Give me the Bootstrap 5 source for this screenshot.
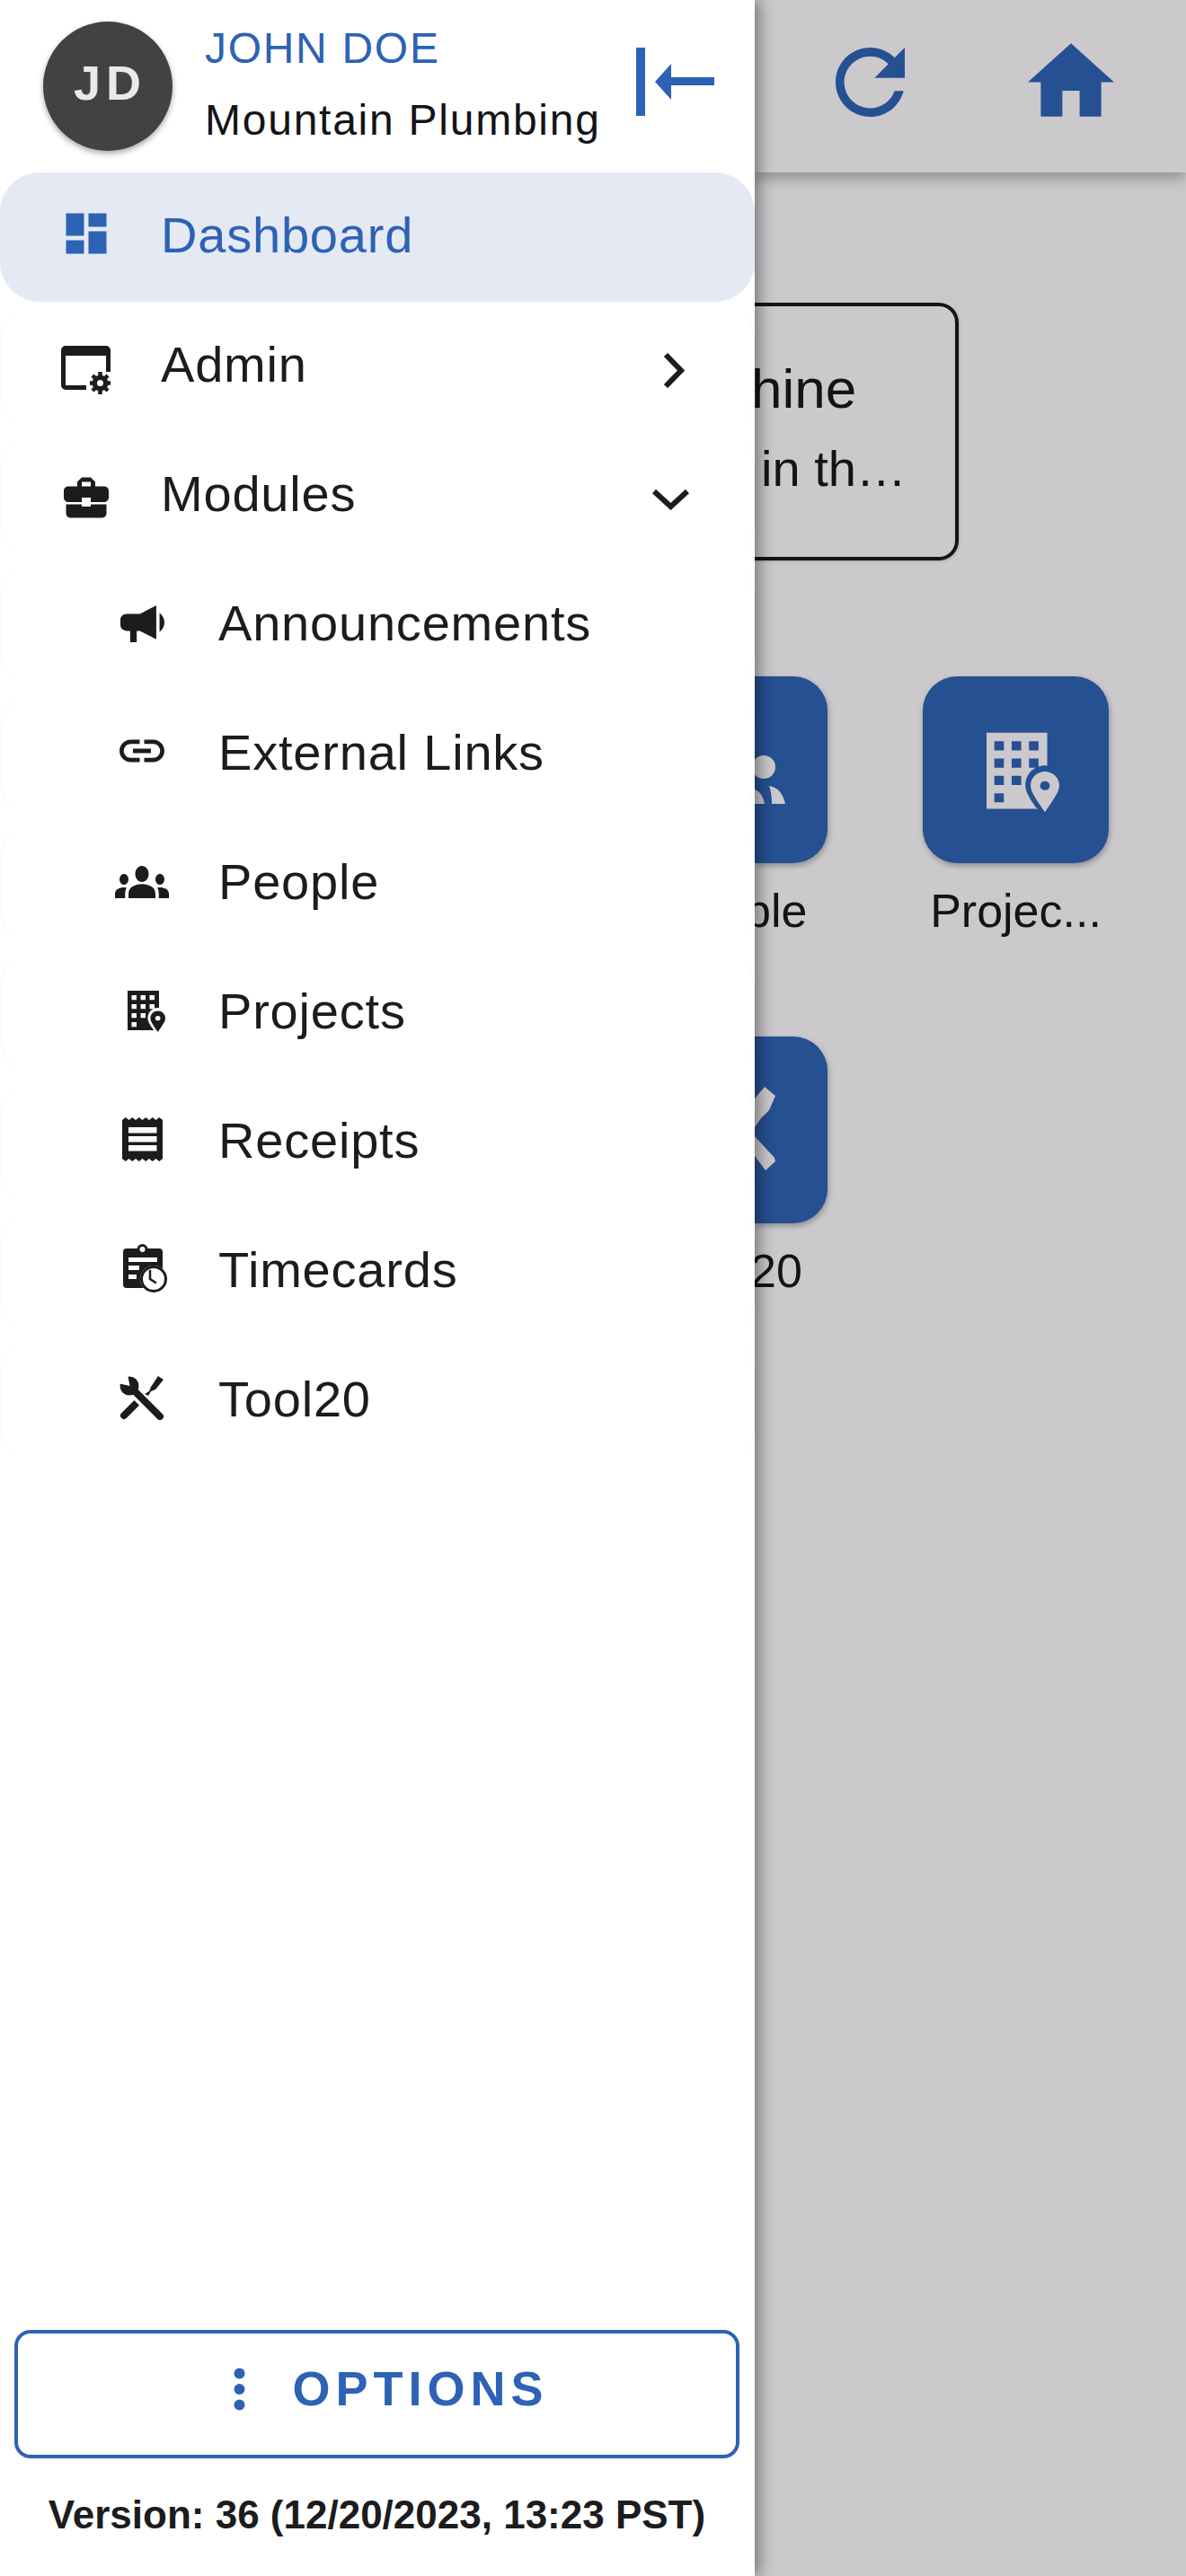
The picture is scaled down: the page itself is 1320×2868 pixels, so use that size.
<!DOCTYPE html>
<html lang="en">
<head>
  <meta charset="UTF-8">
  <title>Mountain Plumbing</title>
  <link href="https://cdn.jsdelivr.net/npm/bootstrap@5.3.0/dist/css/bootstrap.min.css" rel="stylesheet">
  <style>
    html, body { height: 2868px; overflow: hidden; }
    body { font-family: "Liberation Sans", Arial, sans-serif; background: #cbc9cc; color: #1c1c1e; }
    .app-shell { height: 2868px; }

    /* drawer */
    .side-drawer { width: 840px; flex: 0 0 840px; background: #fff; position: relative; z-index: 5; box-shadow: 5px 0 16px rgba(0,0,0,.42); }
    .drawer-head { height: 192px; padding: 0 45px 0 48px; }
    .user-avatar { width: 144px; height: 144px; flex: 0 0 144px; background: #434144; color: #e9e9e9; font-size: 54px; font-weight: 700; letter-spacing: 6px; padding-left: 5px; padding-bottom: 8px; box-shadow: 0 3px 6px rgba(0,0,0,.35); }
    .user-info { margin-left: 36px; }
    .user-name { color: #2d62b4; font-size: 48px; line-height: 80px; letter-spacing: 1.7px; margin-top: -4px; }
    .user-company { font-size: 48px; line-height: 80px; letter-spacing: 1.75px; color: #141416; white-space: nowrap; }
    .collapse-icon { width: 87px; height: 76px; margin-top: -10px; }

    .menu-row { position: relative; height: 144px; padding: 0 0 4px 65px; font-size: 56px; letter-spacing: .8px; color: #1c1c1e; border: 1px solid; border-color: transparent #f8f8f8; border-radius: 44px; }
    .menu-row:hover, .menu-row:focus { color: #1c1c1e; }
    .menu-row.sub-row { padding-left: 127px; }
    .menu-row.active-row { background: #e4e9f3; color: #2d62b4; border-color: #e4e9f3; }
    .icon-slot { width: 60px; height: 60px; flex: 0 0 60px; margin-right: 53px; }
    .sub-row .icon-slot { margin-right: 55px; }
    .menu-chevron { position: absolute; }
    .chev-right { right: 77px; top: 56px; width: 24px; height: 39px; }
    .chev-down { right: 72px; top: 63px; width: 41px; height: 24px; }
    .nudge-admin { margin-top: 12px; }
    .nudge-bldg { margin-left: 10px; }
    .nudge-clock { margin-left: 7px; }

    .drawer-foot { padding: 0 17px 0 16px; }
    .options-btn { height: 143px; font-size: 54px; font-weight: 700; letter-spacing: 6px; color: #2d62b4; border: 4px solid #2d62b4; border-radius: 18px; background: #fff; padding: 0 0 12px 32px; }
    .options-btn:hover { color: #2d62b4; background: #fff; border-color: #2d62b4; }
    .options-dots { margin-right: 52px; }
    .version-line { font-size: 44px; font-weight: 700; height: 131px; padding-top: 30px; color: #1c1c1e; white-space: nowrap; }

    /* page behind the drawer */
    .page-behind { min-width: 0; }
    .top-strip { height: 192px; padding: 0 80px 62px 0; gap: 137px; background: #cbc9cc; box-shadow: 0 7px 14px rgba(0,0,0,.28); color: #255092; }
    .notice-box { width: 227px; height: 287px; margin-top: 145px; border: 4px solid #141416; border-left: 0; border-radius: 0 22px 22px 0; padding-top: 47px; box-shadow: 1px 1px 3px rgba(0,0,0,.18); color: #141416; white-space: nowrap; }
    .notice-title { font-size: 62px; line-height: 89px; margin-left: -4px; }
    .notice-text { font-size: 56px; line-height: 89px; margin-left: 7px; }
    .tile-row { gap: 106px; margin-top: 129px; }
    .tile-row.second { margin-top: 110px; }
    .tile-col { flex: 0 0 207px; width: 207px; }
    .tile-col.cut { flex: 0 0 81px; width: 81px; }
    .tile-box { height: 208px; background: #255092; border-radius: 38px; color: #cbc9cc; box-shadow: 1px 3px 6px rgba(0,0,0,.3); --hole: #255092; }
    .cut .tile-box { border-radius: 0 38px 38px 0; }
    .tile-label { font-size: 52px; line-height: 60px; margin-top: 23px; color: #141416; white-space: nowrap; }
    .label-ple { margin-left: -11px; }
    .label-20 { margin-left: -5px; }
    .people-part { width: 34px; height: 54px; margin-top: 88px; overflow: hidden; display: block; }
    .tool-part { width: 24px; height: 100px; margin-top: 51px; display: block; }
    .bldg-big { width: 81px; height: 90px; margin-left: 15px; margin-top: 6px; }
  </style>
</head>
<body>
  <svg width="0" height="0" class="position-absolute">
    <symbol id="bldg" viewBox="0 0 42 46">
      <path fill="currentColor" d="M0 0h35v44H0z"/>
      <g fill="var(--hole, #fff)">
        <path d="M4.500 5H10v5.300H4.500zM14.500 5H20v5.300h-5.500zM24.500 5H30v5.300h-5.500zM4.500 15H10v5.300H4.500zM14.500 15H20v5.300h-5.500zM24.500 15H30v5.300h-5.500zM4.500 25H10v5.300H4.500zM14.500 25H20v5.300h-5.500zM4.500 35H10v5.300H4.500z"/>
        <path d="M33.700 19c-5.900 0-11.300 4.600-11.300 11.300 0 3.500 2.200 7.500 5.800 12.500l5.500 4.500 5-4.500c3.500-5 5.800-9 5.800-12.500 0-6.700-5.100-11.300-10.800-11.300z"/>
      </g>
      <path fill="currentColor" fill-rule="evenodd" d="M33.700 22.500c-4.300 0-8.300 3.300-8.300 8.200 0 3.300 2.800 7.200 8.300 15.300 5.500-8.100 8.300-12 8.300-15.300 0-4.900-4-8.200-8.300-8.200zm0 5.600a2.800 2.600 0 1 1 0 5.200 2.800 2.600 0 0 1 0-5.200z"/>
    </symbol>
  </svg>

  <div class="app-shell d-flex">
    <aside class="side-drawer d-flex flex-column">
      <div class="drawer-head d-flex align-items-center">
        <div class="user-avatar rounded-circle d-flex align-items-center justify-content-center">JD</div>
        <div class="user-info">
          <div class="user-name">JOHN DOE</div>
          <div class="user-company">Mountain Plumbing</div>
        </div>
        <svg class="collapse-icon ms-auto" viewBox="0 0 87 76" fill="#2d62b4"><path d="M0 0h10v76H0zM21 38l18-20v15h48v9H39v16z"/></svg>
      </div>

      <nav class="nav flex-column">
        <a class="nav-link menu-row active-row d-flex align-items-center" href="#">
          <span class="icon-slot d-flex align-items-center justify-content-center">
            <svg width="60" height="60" viewBox="0 0 24 24" fill="currentColor" class="mb-1"><path d="M3 13h8V3H3v10zm0 8h8v-6H3v6zm10 0h8V11h-8v10zm0-18v6h8V3h-8z"/></svg>
          </span>Dashboard
        </a>
        <a class="nav-link menu-row d-flex align-items-center" href="#">
          <span class="icon-slot d-flex align-items-center justify-content-center">
            <svg width="56" height="54" viewBox="0 0 56 54" class="nudge-admin"><path fill="currentColor" d="M5 0h45a5 5 0 0 1 5 5v24h-5V11H5v33h23v5H5a5 5 0 0 1-5-5V5a5 5 0 0 1 5-5z"/><g stroke="currentColor" stroke-width="4.500"><path d="M43.500 29v25M32 41.500h23M35 33l17 17M52 33 35 50"/></g><circle cx="43.500" cy="41.500" r="9" fill="currentColor"/><circle cx="43.500" cy="41.500" r="3.500" fill="#fff"/></svg>
          </span>Admin
          <svg class="menu-chevron chev-right" viewBox="0 0 24 39" fill="none" stroke="#1c1c1e" stroke-width="6"><path d="M3 2l17 17.500L3 37"/></svg>
        </a>
        <a class="nav-link menu-row d-flex align-items-center" href="#">
          <span class="icon-slot d-flex align-items-center justify-content-center">
            <svg width="60" height="60" viewBox="0 0 24 24" fill="currentColor" class="mt-2"><path d="M10 16v-1H3.010L3 19c0 1.110.89 2 2 2h14c1.110 0 2-.89 2-2v-4h-7v1h-4zm10-9h-4.010V5l-2-2h-4l-2 2v2H4c-1.100 0-2 .9-2 2v3c0 1.110.89 2 2 2h6v-2h4v2h6c1.100 0 2-.9 2-2V9c0-1.100-.9-2-2-2zm-6 0h-4V5h4v2z"/></svg>
          </span>Modules
          <svg class="menu-chevron chev-down" viewBox="0 0 41 24" fill="none" stroke="#1c1c1e" stroke-width="6"><path d="M2 3l18.500 17L39 3"/></svg>
        </a>
        <a class="nav-link menu-row sub-row d-flex align-items-center" href="#">
          <span class="icon-slot d-flex align-items-center justify-content-center">
            <svg width="49" height="41" viewBox="2 6 13.500 13" preserveAspectRatio="none" fill="currentColor"><path d="M4 9c-1.100 0-2 .9-2 2v2c0 1.100.9 2 2 2h1v4h2v-4h1l5 3V6L8 9H4zm11.500 3c0-1.330-.58-2.530-1.500-3.350v6.690c.92-.81 1.500-2.010 1.500-3.340z"/></svg>
          </span>Announcements
        </a>
        <a class="nav-link menu-row sub-row d-flex align-items-center" href="#">
          <span class="icon-slot d-flex align-items-center justify-content-center">
            <svg width="60" height="60" viewBox="0 0 24 24" fill="currentColor" class="mb-1"><path d="M3.900 12c0-1.710 1.390-3.100 3.100-3.100h4V7H7c-2.760 0-5 2.240-5 5s2.240 5 5 5h4v-1.900H7c-1.710 0-3.100-1.390-3.100-3.100zM8 13h8v-2H8v2zm9-6h-4v1.900h4c1.710 0 3.100 1.390 3.100 3.100s-1.390 3.100-3.100 3.100h-4V17h4c2.760 0 5-2.240 5-5s-2.240-5-5-5z"/></svg>
          </span>External Links
        </a>
        <a class="nav-link menu-row sub-row d-flex align-items-center" href="#">
          <span class="icon-slot d-flex align-items-center justify-content-center">
            <svg width="60" height="36" viewBox="0 6 24 12" preserveAspectRatio="none" fill="currentColor"><path d="M12 12.750c1.630 0 3.070.39 4.240.9 1.080.48 1.760 1.560 1.760 2.730V18H6v-1.610c0-1.180.68-2.260 1.760-2.730 1.170-.52 2.610-.91 4.240-.91zM4 13c1.100 0 2-.9 2-2s-.9-2-2-2-2 .9-2 2 .9 2 2 2zm1.130 1.100c-.37-.06-.74-.1-1.130-.1-.99 0-1.930.21-2.780.58C.48 14.900 0 15.620 0 16.430V18h4.500v-1.610c0-.83.23-1.610.63-2.290zM20 13c1.100 0 2-.9 2-2s-.9-2-2-2-2 .9-2 2 .9 2 2 2zm4 3.430c0-.81-.48-1.530-1.220-1.850-.85-.37-1.790-.58-2.780-.58-.39 0-.76.04-1.130.1.4.68.63 1.460.63 2.290V18H24v-1.570zM12 6c1.660 0 3 1.340 3 3s-1.340 3-3 3-3-1.340-3-3 1.340-3 3-3z"/></svg>
          </span>People
        </a>
        <a class="nav-link menu-row sub-row d-flex align-items-center" href="#">
          <span class="icon-slot d-flex align-items-center justify-content-center">
            <svg width="42" height="46" class="nudge-bldg"><use href="#bldg"/></svg>
          </span>Projects
        </a>
        <a class="nav-link menu-row sub-row d-flex align-items-center" href="#">
          <span class="icon-slot d-flex align-items-center justify-content-center">
            <svg width="45" height="49" viewBox="0 0 45 49" class="mb-1"><path fill="currentColor" d="M0 3 3.750 0l3.750 3 3.750-3 3.750 3L18.750 0l3.750 3 3.750-3L30 3l3.750-3 3.750 3 3.750-3L45 3v43l-3.750 3-3.750-3-3.750 3L30 46l-3.750 3-3.750-3-3.750 3L15 46l-3.750 3-3.750-3-3.750 3L0 46z"/><path fill="#fff" d="M7 11h31.500v6.500H7zM7 21h31.500v6.500H7zM7 31h31.500v6.500H7z"/></svg>
          </span>Receipts
        </a>
        <a class="nav-link menu-row sub-row d-flex align-items-center" href="#">
          <span class="icon-slot d-flex align-items-center justify-content-center">
            <svg width="49" height="54" viewBox="0 0 49 54" class="mb-1 nudge-clock"><rect y="5" width="44" height="44" rx="4" fill="currentColor"/><circle cx="21.500" cy="6" r="6" fill="currentColor"/><circle cx="21.500" cy="6" r="3" fill="#fff"/><path fill="#fff" d="M6 15h32v5H6zM6 24h12v5H6zM6 34h9v5H6z"/><circle cx="34" cy="39" r="15" fill="#fff"/><circle cx="34" cy="39" r="13.500" fill="#fff" stroke="currentColor" stroke-width="3"/><path d="M30 29v10l7 4.500" fill="none" stroke="currentColor" stroke-width="2.500"/></svg>
          </span>Timecards
        </a>
        <a class="nav-link menu-row sub-row d-flex align-items-center" href="#">
          <span class="icon-slot d-flex align-items-center justify-content-center">
            <svg width="50" height="50" viewBox="0 0 50 50" class="mb-1"><g fill="none" stroke-linecap="round"><path stroke="currentColor" stroke-width="8" d="M5 45l14-14"/><path stroke="#fff" stroke-width="15" d="M17 18l28 28"/><path stroke="currentColor" stroke-width="8" d="M15 16l30 30"/></g><circle cx="11" cy="12" r="10.500" fill="currentColor"/><path fill="#fff" d="M11.500 12 9-1h-11V9z"/><path fill="currentColor" d="M28 21l5-3 2-5 8-12 6 4-9 11-5 2-3 5z"/></svg>
          </span>Tool20
        </a>
      </nav>

      <div class="drawer-foot mt-auto">
        <button type="button" class="btn options-btn w-100 d-flex align-items-center justify-content-center">
          <svg width="13" height="48" viewBox="0 0 13 48" fill="currentColor" class="options-dots"><circle cx="6.500" cy="6.500" r="6"/><circle cx="6.500" cy="24" r="6"/><circle cx="6.500" cy="41.500" r="6"/></svg>
          <span>OPTIONS</span>
        </button>
        <div class="version-line text-center">Version: 36 (12/20/2023, 13:23 PST)</div>
      </div>
    </aside>

    <main class="page-behind flex-grow-1">
      <div class="top-strip d-flex justify-content-end align-items-end">
        <svg width="77" height="77" viewBox="4 4 16 16" fill="currentColor"><path d="M17.650 6.350C16.200 4.900 14.210 4 12 4c-4.420 0-7.990 3.580-7.990 8s3.570 8 7.990 8c3.730 0 6.840-2.550 7.730-6h-2.080c-.82 2.330-3.040 4-5.650 4-3.310 0-6-2.690-6-6s2.690-6 6-6c1.660 0 3.140.69 4.220 1.780L13 11h7V4l-2.350 2.350z"/></svg>
        <svg width="96" height="82" viewBox="2 3 20 17" fill="currentColor"><path d="M10 20v-6h4v6h5v-8h3L12 3 2 12h3v8z"/></svg>
      </div>

      <div class="notice-box">
        <div class="notice-title">hine</div>
        <div class="notice-text">in th…</div>
      </div>

      <div class="tile-row d-flex">
        <div class="tile-col cut">
          <div class="tile-box overflow-hidden">
            <svg class="people-part" viewBox="0 0 34 54" fill="currentColor"><circle cx="10" cy="13" r="13"/><path d="M0 38q8 2 11 16H0zM16 34q14 2 18 20H19q0-12-3-20z"/></svg>
          </div>
          <div class="tile-label label-ple">ple</div>
        </div>
        <div class="tile-col">
          <div class="tile-box d-flex align-items-center justify-content-center">
            <svg class="bldg-big"><use href="#bldg"/></svg>
          </div>
          <div class="tile-label text-center">Projec...</div>
        </div>
      </div>

      <div class="tile-row second d-flex">
        <div class="tile-col cut">
          <div class="tile-box overflow-hidden">
            <svg class="tool-part" viewBox="0 0 24 100" fill="currentColor"><path d="M0 18 11 5l12 10-7 16-9 9-7 10zM0 60l22 24 1 4-11 10L0 82z"/></svg>
          </div>
          <div class="tile-label label-20">20</div>
        </div>
      </div>
    </main>
  </div>

  <script src="https://cdn.jsdelivr.net/npm/bootstrap@5.3.0/dist/js/bootstrap.bundle.min.js"></script>
</body>
</html>
